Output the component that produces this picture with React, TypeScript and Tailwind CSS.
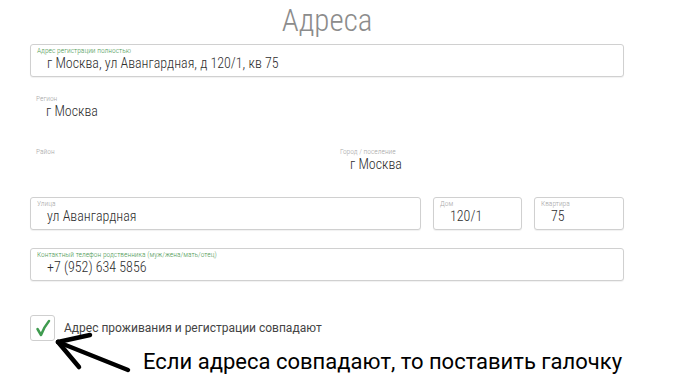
import React from "react";

const font = { fontFamily: '"Roboto Condensed", Roboto, "Noto Sans", sans-serif' };

function Field({
  label,
  value,
  green,
  className,
}: {
  label: string;
  value: string;
  green?: boolean;
  className?: string;
}) {
  return (
    <div
      className={`h-[33px] rounded-[3px] border border-[#d0d0d0] bg-white shadow-[0_1px_1px_rgba(0,0,0,0.06)] ${className ?? ""}`}
    >
      <div
        className={`pl-[6px] pt-[2px] text-[7.5px] font-light leading-[8px] ${green ? "text-[#4f9a55]" : "text-[#a8a8a8]"}`}
      >
        {label}
      </div>
      <div className="pl-[16px] text-[14px] font-light leading-[17px] text-[#2e2e2e]">{value}</div>
    </div>
  );
}

function Plain({ label, value }: { label: string; value?: string }) {
  return (
    <div>
      <div className="pl-[6px] text-[7.5px] font-light leading-[8px] text-[#a8a8a8]">{label}</div>
      <div className="h-[17px] pl-[16px] text-[14px] font-light leading-[17px] text-[#2e2e2e]">{value}</div>
    </div>
  );
}

export default function App() {
  return (
    <div className="relative h-[374px] w-[700px] overflow-hidden bg-white" style={font}>
      <div className="flex h-[44px] justify-center pt-[4px]">
        <div className="ml-[-46px] text-[31px] font-light leading-[34px] text-[#8c8c8c]">Адреса</div>
      </div>
      <div className="flex w-[654px] flex-col pl-[30px]">
        <Field
          className="w-[594px]"
          green
          label="Адрес регистрации полностью"
          value="г Москва, ул Авангардная, д 120/1, кв 75"
        />
        <div className="mt-[18px]">
          <Plain label="Регион" value="г Москва" />
        </div>
        <div className="mt-[28px] grid w-[594px] grid-cols-[304px_1fr]">
          <Plain label="Район" />
          <Plain label="Город / поселение" value="г Москва" />
        </div>
        <div className="mt-[24px] flex w-[594px] gap-[12px]">
          <Field className="w-[391px]" label="Улица" value="ул Авангардная" />
          <Field className="w-[89px]" label="Дом" value="120/1" />
          <Field className="w-[90px]" label="Квартира" value="75" />
        </div>
        <Field
          className="mt-[18px] w-[594px]"
          green
          label="Контактный телефон родственника (муж/жена/мать/отец)"
          value="+7 (952) 634 5856"
        />
        <div className="mt-[34px] flex items-center gap-[9px]">
          <div className="flex h-[26px] w-[25px] items-center justify-center rounded-[3px] border border-[#cfcfcf] bg-white">
            <svg width="16" height="18" viewBox="0 0 16 18">
              <path d="M2.5 10 L6 16 Q9 8 14 2" fill="none" stroke="#3f9b4f" strokeWidth="2.5" strokeLinecap="round" strokeLinejoin="round" />
            </svg>
          </div>
          <div className="text-[12px] leading-[14px] text-[#444]" style={{ fontFamily: 'Roboto, "Noto Sans", sans-serif' }}>
            Адрес проживания и регистрации совпадают
          </div>
        </div>
        <div className="mt-[8px] pl-[113px] text-[22px] leading-[26px] text-black" style={{ fontFamily: 'Roboto, "Noto Sans", sans-serif' }}>
          Если адреса совпадают, то поставить галочку
        </div>
      </div>
      <svg className="pointer-events-none absolute left-0 top-0" width="700" height="374" viewBox="0 0 700 374">
        <g stroke="#000" strokeWidth="4.5" strokeLinecap="round" fill="none">
          <path d="M58 342 L128 370" />
          <path d="M58 342 L90 335" />
          <path d="M58 342 L79 367" />
        </g>
      </svg>
    </div>
  );
}
